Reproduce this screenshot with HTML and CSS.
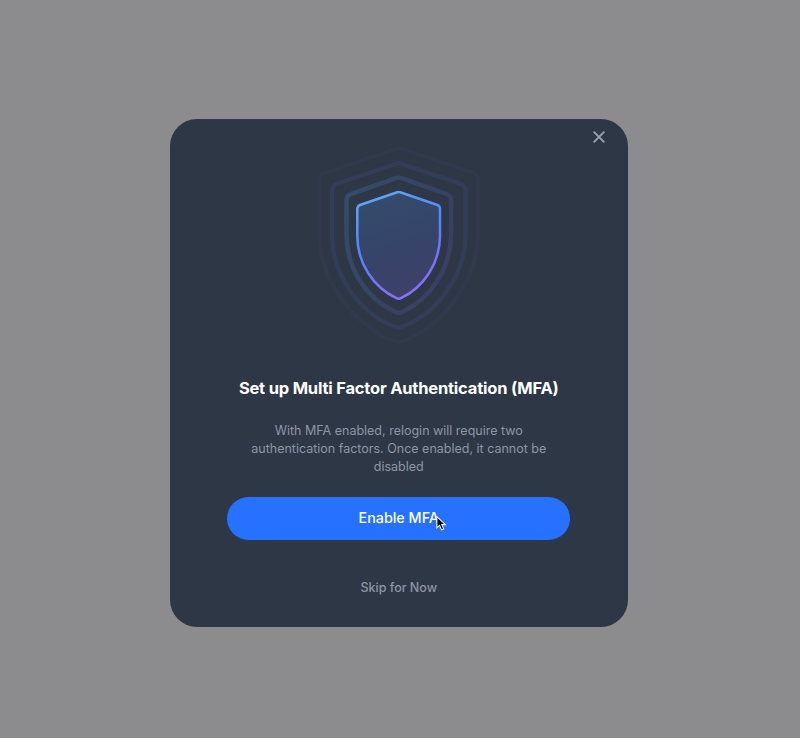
FILE: index.html
```html
<!DOCTYPE html>
<html lang="en">
<head>
<meta charset="utf-8">
<title>Set up MFA</title>
<link rel="stylesheet" href="styles.css">
</head>
<body>
<main class="dialog" role="dialog" aria-labelledby="title">
  <button class="close" aria-label="Close">
    <svg width="12" height="12" viewBox="0 0 12 12"><path d="M1.2 1.2 10.8 10.8M10.8 1.2 1.2 10.8"/></svg>
  </button>
  <svg class="shield" width="200" height="220" viewBox="0 0 200 220">
    <defs>
      <linearGradient id="edge" gradientUnits="userSpaceOnUse" x1="65" y1="60" x2="110" y2="165">
        <stop offset="0" stop-color="#62a6fa"/><stop offset=".45" stop-color="#4b86ff"/><stop offset=".75" stop-color="#7671fa"/><stop offset="1" stop-color="#8b70fb"/>
      </linearGradient>
      <linearGradient id="fill" gradientUnits="userSpaceOnUse" x1="75" y1="60" x2="110" y2="160">
        <stop offset="0" stop-color="#344c6b"/><stop offset=".5" stop-color="#36446a"/><stop offset="1" stop-color="#3f4067"/>
      </linearGradient>
      <linearGradient id="ring" gradientUnits="userSpaceOnUse" x1="45" y1="80" x2="145" y2="120">
        <stop offset="0" stop-color="#344c68"/><stop offset=".6" stop-color="#364364"/><stop offset="1" stop-color="#394063"/>
      </linearGradient>
    </defs>
    <path class="ring outer" d="M96 14Q98.700 13 101.400 14L172.500 37.500Q178 39.500 178 45V98C178 146 144 189 104 206Q98.700 208 93.400 206C53 189 19.500 146 19.500 98V45Q19.500 39.500 25 37.500Z"/>
    <path class="ring middle" d="M96 28.800Q98.700 27.800 101.400 28.800L160 48.500Q165.500 50.500 165.500 55.500V100C165.500 139 139 177 103 191.500Q98.700 193.500 94.400 191.500C58 177 32 139 32 100V55.500Q32 50.500 37.500 48.500Z"/>
    <path class="ring inner" d="M96 43.200Q98.700 42.200 101.400 43.200L146.500 59Q151 60.700 151 65V99C151 134 130 164 102 177Q98.700 178.700 95.400 177C67 164 46.500 134 46.500 99V65Q46.500 60.700 51 59Z"/>
    <path class="core" d="M97.200 57.300Q98.700 56.700 100.200 57.300L137.500 70Q140 71 140 74V101C140 128 124 152 101 163.200Q98.700 164.500 96.400 163.200C73 152 57.300 128 57.300 101V74Q57.300 71 60 70Z"/>
  </svg>
  <h1 id="title">Set up Multi Factor Authentication (MFA)</h1>
  <p>With MFA enabled, relogin will require two<br>authentication factors. Once enabled, it cannot be<br>disabled</p>
  <button class="enable"><span>Enable MFA</span>
    <svg class="cursor" width="12" height="17" viewBox="0 0 14 18"><path d="M1 1V14L4.100 11.200 6.500 16.500 9 15.300 6.700 10.300H11Z"/></svg>
  </button>
  <button class="skip"><span>Skip for Now</span></button>
</main>
</body>
</html>
```

FILE: styles.css
```css
* { box-sizing: border-box; }
body {
  margin: 0;
  height: 738px;
  overflow: hidden;
  background: #8c8c8e;
  font-family: Inter, "Liberation Sans", sans-serif;
}
button { border: 0; padding: 0; background: none; font: inherit; }
.dialog {
  position: relative;
  display: flex;
  flex-direction: column;
  align-items: center;
  width: 457.500px;
  height: 508px;
  margin: 119px 0 0 170px;
  padding-top: 16px;
  border-radius: 27px;
  background: #2e3745;
}
.close { position: absolute; top: 12px; right: 22.500px; width: 12px; height: 12px; }
.close svg { display: block; fill: none; stroke: #97a3b6; stroke-width: 1.900; stroke-linecap: round; }
.shield { flex: none; margin-left: 2.500px; }
.shield path { stroke-linejoin: round; }
.ring { fill: none; stroke-width: 4.500; }
.outer { stroke: #31394c; }
.middle { stroke: #323d56; }
.inner { stroke: url(#ring); }
.shield .core { fill: url(#fill); stroke: url(#edge); stroke-width: 2.500; }
h1 {
  margin: 22px 0 0;
  color: #fff;
  font-size: 16.500px;
  line-height: 22px;
  font-weight: 700;
  letter-spacing: -0.200px;
  white-space: nowrap;
}
p {
  margin: 23px 0 0;
  color: #8c96a6;
  font-size: 12.500px;
  line-height: 18px;
  text-align: center;
  white-space: nowrap;
}
.enable {
  position: relative;
  width: 343px;
  height: 43px;
  margin-top: 21px;
  padding-bottom: 2px;
  border-radius: 22px;
  background: #2671ff;
  color: #fff;
  font-size: 14.300px;
  font-weight: 500;
}
.cursor { position: absolute; left: 209px; top: 18px; fill: #080b12; stroke: #fff; stroke-width: 1.200; }
.skip { margin-top: 37px; height: 20px; color: #8c96a6; font-size: 12.500px; font-weight: 500; }
```
